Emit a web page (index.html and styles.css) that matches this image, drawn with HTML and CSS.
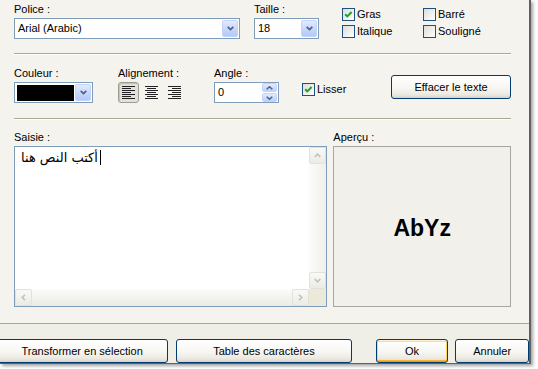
FILE: index.html
```html
<!DOCTYPE html>
<html>
<head>
<meta charset="utf-8">
<link rel="stylesheet" href="styles.css">
</head>
<body>
<div class="window">
  <div class="panel">
    <div class="row row1">
      <div class="field f-font">
        <div class="lbl">Police :</div>
        <div class="combo">
          <span class="val">Arial (Arabic)</span>
          <span class="dd"><svg width="7" height="5" viewBox="0 0 7 5"><path d="M0.7 0.8 L3.5 3.6 L6.3 0.8" fill="none" stroke="#4d6185" stroke-width="1.7"/></svg></span>
        </div>
      </div>
      <div class="field f-size">
        <div class="lbl">Taille :</div>
        <div class="combo">
          <span class="val">18</span>
          <span class="dd"><svg width="7" height="5" viewBox="0 0 7 5"><path d="M0.7 0.8 L3.5 3.6 L6.3 0.8" fill="none" stroke="#4d6185" stroke-width="1.7"/></svg></span>
        </div>
      </div>
      <div class="checks">
        <div class="chk"><span class="box"><svg width="11" height="11" viewBox="0 0 11 11"><path d="M2.2 5.2 L4.3 7.4 L8.6 3" fill="none" stroke="#21a121" stroke-width="2"/></svg></span>Gras</div>
        <div class="chk"><span class="box"></span>Barré</div>
        <div class="chk"><span class="box"></span>Italique</div>
        <div class="chk"><span class="box"></span>Souligné</div>
      </div>
    </div>
    <div class="sep"></div>
    <div class="row row2">
      <div class="field f-color">
        <div class="lbl">Couleur :</div>
        <div class="combo">
          <span class="swatch"></span>
          <span class="dd"><svg width="7" height="5" viewBox="0 0 7 5"><path d="M0.7 0.8 L3.5 3.6 L6.3 0.8" fill="none" stroke="#4d6185" stroke-width="1.7"/></svg></span>
        </div>
      </div>
      <div class="field f-align">
        <div class="lbl">Alignement :</div>
        <div class="aligns">
          <span class="abtn pressed"><svg width="13" height="13" viewBox="0 0 13 13"><path d="M0 0.5H13M0 2.5H9M0 4.5H13M0 6.5H9M0 8.5H13M0 10.5H9M0 12.5H13" stroke="#222" stroke-width="1"/></svg></span>
          <span class="abtn"><svg width="13" height="13" viewBox="0 0 13 13"><path d="M0 0.5H13M2 2.5H11M0 4.5H13M2 6.5H11M0 8.5H13M2 10.5H11M0 12.5H13" stroke="#222" stroke-width="1"/></svg></span>
          <span class="abtn"><svg width="13" height="13" viewBox="0 0 13 13"><path d="M0 0.5H13M4 2.5H13M0 4.5H13M4 6.5H13M0 8.5H13M4 10.5H13M0 12.5H13" stroke="#222" stroke-width="1"/></svg></span>
        </div>
      </div>
      <div class="field f-angle">
        <div class="lbl">Angle :</div>
        <div class="combo">
          <span class="val">0</span>
          <span class="spin">
            <span class="sb"><svg width="7" height="4" viewBox="0 0 7 4"><path d="M0.7 3.3 L3.5 0.8 L6.3 3.3" fill="none" stroke="#4d6185" stroke-width="1.5"/></svg></span>
            <span class="sb"><svg width="7" height="4" viewBox="0 0 7 4"><path d="M0.7 0.7 L3.5 3.2 L6.3 0.7" fill="none" stroke="#4d6185" stroke-width="1.5"/></svg></span>
          </span>
        </div>
      </div>
      <div class="chk lisser"><span class="box"><svg width="11" height="11" viewBox="0 0 11 11"><path d="M2.2 5.2 L4.3 7.4 L8.6 3" fill="none" stroke="#21a121" stroke-width="2"/></svg></span>Lisser</div>
      <div class="btn clear">Effacer le texte</div>
    </div>
    <div class="sep"></div>
    <div class="row row3">
      <div class="field f-input">
        <div class="lbl">Saisie :</div>
        <div class="textbox">
          <div class="content"><span class="ar">أكتب النص هنا</span><span class="caret"></span></div>
          <div class="vscroll">
            <span class="sbtn"><svg width="7" height="5" viewBox="0 0 7 5"><path d="M0.7 4 L3.5 1.2 L6.3 4" fill="none" stroke="#c2c1ba" stroke-width="1.6"/></svg></span>
            <span class="sbtn"><svg width="7" height="5" viewBox="0 0 7 5"><path d="M0.7 1 L3.5 3.8 L6.3 1" fill="none" stroke="#c2c1ba" stroke-width="1.6"/></svg></span>
          </div>
          <div class="hscroll">
            <span class="sbtn"><svg width="5" height="7" viewBox="0 0 5 7"><path d="M4 0.7 L1.2 3.5 L4 6.3" fill="none" stroke="#c2c1ba" stroke-width="1.6"/></svg></span>
            <span class="sbtn"><svg width="5" height="7" viewBox="0 0 5 7"><path d="M1 0.7 L3.8 3.5 L1 6.3" fill="none" stroke="#c2c1ba" stroke-width="1.6"/></svg></span>
          </div>
          <div class="corner"></div>
        </div>
      </div>
      <div class="field f-preview">
        <div class="lbl">Aperçu :</div>
        <div class="preview"><span class="sample">AbYz</span></div>
      </div>
    </div>
  </div>
  <div class="footer">
    <div class="btn b-transform">Transformer en sélection</div>
    <div class="btn b-table">Table des caractères</div>
    <div class="btn b-ok default">Ok</div>
    <div class="btn b-cancel">Annuler</div>
  </div>
</div>
</body>
</html>
```

FILE: styles.css
```css
* { box-sizing: border-box; }
html, body { margin: 0; padding: 0; }
body {
  width: 538px;
  height: 369px;
  overflow: hidden;
  background: #fdfdfd;
  font-family: "Liberation Sans", Arial, sans-serif;
  font-size: 11px;
  color: #000;
}
.window {
  width: 531px;
  height: 364px;
  background: #f4f3ee;
  border-right: 2px solid #606060;
  border-bottom: 1px solid #606060;
  box-shadow: 2px 2px 3px rgba(0, 0, 0, 0.35);
  display: flex;
  flex-direction: column;
}
.panel {
  height: 324px;
  padding: 0 18px 0 14px;
  border-bottom: 1px solid #aca899;
  display: flex;
  flex-direction: column;
}
.row { display: flex; align-items: flex-start; }
.row1 { height: 53px; padding-top: 3px; }
.row2 { height: 63px; padding-top: 12px; }
.row3 { padding-top: 11px; }
.sep {
  height: 2px;
  border-top: 1px solid #aca899;
  border-bottom: 1px solid #ffffff;
}
.lbl { height: 13px; line-height: 13px; margin-bottom: 2px; white-space: nowrap; }
.field { display: flex; flex-direction: column; }

.combo {
  height: 21px;
  border: 1px solid #7f9db9;
  background: #fff;
  display: flex;
  align-items: center;
}
.combo .val { flex: 1; padding-left: 3px; line-height: 19px; }
.dd {
  width: 16px;
  height: 17px;
  margin: 0 1px;
  border: 1px solid #c3d3fd;
  border-radius: 2px;
  background: linear-gradient(#e3ebfe, #c6d6fb 55%, #b5caf7);
  display: flex;
  align-items: center;
  justify-content: center;
}
.f-font { width: 226px; }
.f-size { width: 65px; margin-left: 14px; }

.checks {
  display: grid;
  grid-template-columns: 81px 81px;
  row-gap: 4px;
  margin-left: 23px;
  margin-top: 5px;
}
.chk { display: flex; align-items: center; height: 13px; line-height: 13px; gap: 2px; white-space: nowrap; }
.box {
  width: 13px;
  height: 13px;
  border: 1px solid #1c5180;
  background: linear-gradient(135deg, #dcdcd7, #ffffff);
  display: flex;
  align-items: center;
  justify-content: center;
  flex: none;
}

.f-color { width: 79px; }
.swatch { flex: 1; height: 16px; margin-left: 2px; background: #000; }
.f-align { margin-left: 25px; }
.aligns { display: flex; gap: 2px; }
.abtn {
  width: 21px;
  height: 21px;
  display: flex;
  align-items: center;
  justify-content: center;
  border: 1px solid transparent;
  border-radius: 3px;
}
.abtn.pressed {
  border-color: #9d9d92;
  background: #e3e2da;
  box-shadow: inset 1px 1px 1px rgba(0, 0, 0, 0.15);
}
.f-angle { width: 65px; margin-left: 29px; }
.spin { display: flex; flex-direction: column; gap: 1px; margin-right: 1px; }
.sb {
  width: 15px;
  height: 9px;
  border: 1px solid #c3d3fd;
  border-radius: 2px;
  background: linear-gradient(#e3ebfe, #bccffa);
  display: flex;
  align-items: center;
  justify-content: center;
}
.lisser { margin-left: 23px; margin-top: 16px; }

.btn {
  height: 24px;
  border: 1px solid #003c74;
  border-radius: 3px;
  background: linear-gradient(#ffffff 0%, #f7f6f2 55%, #ebe8df 85%, #d8d2c6 100%);
  display: flex;
  align-items: center;
  justify-content: center;
  white-space: nowrap;
}
.clear { width: 120px; margin-left: auto; margin-top: 8px; }

.f-input { width: 314px; }
.f-preview { width: 178px; margin-left: 6px; }
.textbox {
  height: 161px;
  border: 1px solid #7f9db9;
  background: #fff;
  display: grid;
  grid-template-columns: 1fr 17px;
  grid-template-rows: 1fr 17px;
}
.content { padding: 3px 0 0 6px; line-height: 16px; }
.ar { font-family: "DejaVu Sans", sans-serif; font-size: 13px; }
.caret { display: inline-block; width: 1px; height: 15px; background: #000; margin-left: 2px; vertical-align: -3px; }
.vscroll {
  background: linear-gradient(to right, #fcfcfa, #f0efe9);
  display: flex;
  flex-direction: column;
  justify-content: space-between;
}
.hscroll {
  background: linear-gradient(#fbfbf9, #ecebe3);
  display: flex;
  justify-content: space-between;
}
.corner { background: #ece9d8; }
.sbtn {
  width: 17px;
  height: 17px;
  border: 1px solid #e2e1da;
  border-radius: 2px;
  background: linear-gradient(#f9f9f6, #ecebe5);
  display: flex;
  align-items: center;
  justify-content: center;
}
.preview {
  height: 161px;
  border: 1px solid #a7a6a0;
  background: #f1f0eb;
  display: flex;
  align-items: center;
  justify-content: center;
  padding-top: 4px;
}
.sample { font-weight: bold; font-size: 23px; }

.footer {
  flex: 1;
  background: #efeee7;
  display: flex;
  align-items: flex-start;
  padding-top: 15px;
}
.b-transform { width: 173px; margin-left: -4px; }
.b-table { width: 176px; margin-left: 8px; }
.b-ok { width: 73px; margin-left: 24px; }
.b-cancel { width: 74px; margin-left: 7px; }
.btn.default {
  box-shadow: inset 0 1px 0 #fff0cf, inset 0 -1px 0 #e5a01a, inset 1px 0 0 #fbd850, inset -1px 0 0 #fbd850, inset 0 2px 0 #f9dc8a, inset 0 -2px 0 #f8b330;
}
```
